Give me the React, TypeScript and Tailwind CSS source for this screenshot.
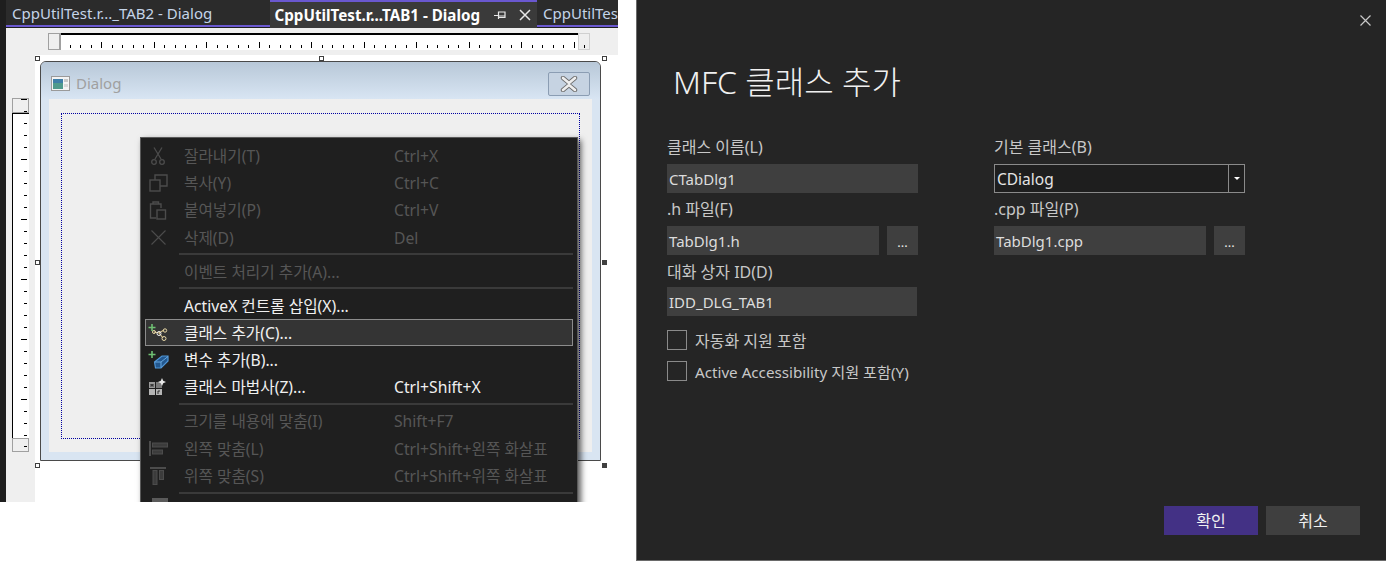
import type { ReactNode } from "react";

const FONT = "font-['Noto_Sans','Noto_Sans_CJK_KR',sans-serif]";

function HRuler() {
  const ticks = [];
  for (let i = 0; i < 49; i++) {
    const x = Math.floor(9 + i * 10.51) + 0.5;
    const major = i % 5 === 3;
    ticks.push(<line key={i} x1={x} x2={x} y1={major ? 7 : 10} y2={13} stroke="#000" strokeWidth="1" />);
  }
  return (
    <div className="flex h-[17px] w-[542px]">
      <div className="h-[17px] w-[13px] border border-[#a0a0a0] bg-[#efefef] border-r-2" />
      <svg width="517" height="17" className="block border-t-2 border-t-black bg-white">
        {ticks}
      </svg>
      <div className="flex h-[17px] w-[12px] items-end justify-center border border-[#d0d0d0] bg-[#efefef] pb-[1px]">
        <div className="h-[3px] w-px bg-black" />
      </div>
    </div>
  );
}

function VRuler() {
  const ticks = [];
  for (let i = 0; i < 27; i++) {
    const y = 9.5 + i * 12;
    const major = i % 5 === 3;
    ticks.push(<line key={i} x1={major ? 8 : 11} x2={14} y1={y} y2={y} stroke="#000" strokeWidth="1" />);
  }
  return (
    <div className="ml-[6px] mt-[70px] flex w-[17px] flex-col">
      <div className="relative h-[15px] w-[17px] border border-[#a0a0a0] bg-[#efefef]">
        <div className="absolute right-[1px] top-0 h-px w-[6px] bg-black" />
        <div className="absolute bottom-0 right-[1px] h-px w-[3px] bg-black" />
      </div>
      <svg width="17" height="325" className="block border-l border-t border-l-black border-t-black bg-white">
        {ticks}
      </svg>
      <div className="relative h-[14px] w-[17px] border border-[#a0a0a0] bg-[#efefef]">
        <div className="absolute right-[1px] top-[7px] h-px w-[3px] bg-black" />
      </div>
    </div>
  );
}

function Handle({ x, y, filled }: { x: number; y: number; filled?: boolean }) {
  return (
    <div
      className={`absolute h-[5px] w-[5px] border border-[#404040] ${filled ? "bg-[#404040]" : "bg-white"}`}
      style={{ left: x, top: y }}
    />
  );
}

function DialogIcon() {
  return (
    <svg width="19" height="15" viewBox="0 0 19 15">
      <rect x="0.5" y="0.5" width="18" height="14" fill="#f4f4f4" stroke="#9a9a9a" />
      <rect x="2" y="3" width="10" height="10" fill="#4f9a8c" />
      <rect x="2" y="3" width="10" height="4" fill="#3f7fa8" />
      <rect x="13" y="3" width="4" height="3" fill="#c8c8c8" />
      <rect x="13" y="8" width="4" height="3" fill="#d8d8d8" />
    </svg>
  );
}

function CloseGlyph() {
  return (
    <svg width="18" height="16" viewBox="0 0 18 16">
      <path d="M3 2 L9 7 L15 2 M15 14 L9 9 L3 14" fill="none" stroke="#6e6e6e" strokeWidth="4.4" strokeLinecap="round" />
      <path d="M3 2 L9 7 L15 2 M15 14 L9 9 L3 14" fill="none" stroke="#eeeeee" strokeWidth="2.6" strokeLinecap="round" />
    </svg>
  );
}

const DIM = "#4c4c4c";

function Scissors() {
  return (
    <svg width="14" height="18" viewBox="0 0 14 18" fill="none" stroke={DIM} strokeWidth="1.3">
      <path d="M3 0.5 L10 12 M11 0.5 L4 12" />
      <circle cx="3" cy="15" r="2.3" />
      <circle cx="11" cy="15" r="2.3" />
    </svg>
  );
}

function CopyIcon() {
  return (
    <svg width="19" height="18" viewBox="0 0 19 18" fill="none" stroke={DIM} strokeWidth="1.4">
      <rect x="1" y="6" width="10" height="11" />
      <path d="M6 6 V1 H18 V12 H11" />
    </svg>
  );
}

function PasteIcon() {
  return (
    <svg width="18" height="20" viewBox="0 0 18 20" fill="none" stroke={DIM} strokeWidth="1.4">
      <path d="M7 18 H1.5 V4 H12 V8" />
      <path d="M4 4 V2 H9.5 V4" />
      <rect x="8" y="10" width="8.5" height="9" />
    </svg>
  );
}

function DeleteIcon() {
  return (
    <svg width="15" height="15" viewBox="0 0 15 15" fill="none" stroke={DIM} strokeWidth="1.1">
      <path d="M0.5 0.5 L14.5 14.5 M14.5 0.5 L0.5 14.5" />
    </svg>
  );
}

function AddClassIcon() {
  return (
    <svg width="20" height="18" viewBox="0 0 20 18" fill="none">
      <path d="M4 0 V7 M0.5 3.5 H7.5" stroke="#6fbf73" strokeWidth="1.6" />
      <path d="M6 8 L11 9 L16 6 M11 9 L15 14" stroke="#d8c48e" strokeWidth="1.1" />
      <circle cx="6" cy="8" r="1.5" stroke="#e6d6a6" />
      <circle cx="11" cy="9.5" r="2" stroke="#f0f0f0" />
      <circle cx="17" cy="6.5" r="1.7" stroke="#e6d6a6" />
      <circle cx="16" cy="14.5" r="2" stroke="#e6d6a6" />
    </svg>
  );
}

function AddVarIcon() {
  return (
    <svg width="21" height="18" viewBox="0 0 21 18" fill="none">
      <path d="M4 0 V7 M0.5 3.5 H7.5" stroke="#6fbf73" strokeWidth="1.6" />
      <path d="M6.5 11 L14 5 H20 V10 L13 17 H7.5 Z" fill="#23588f" stroke="#4f95d6" strokeWidth="1.2" />
      <path d="M7 11 H13 L20 5.5 M13 11 V16.5" stroke="#6fb0e6" strokeWidth="0.9" />
    </svg>
  );
}

function WizardIcon() {
  return (
    <svg width="18" height="18" viewBox="0 0 18 18">
      <rect x="0" y="4" width="6" height="6" fill="#9a9a9a" />
      <rect x="7" y="4" width="6" height="6" fill="#9a9a9a" opacity="0.75" />
      <rect x="0" y="11" width="6" height="6" fill="#b5b5b5" />
      <rect x="7" y="11" width="6" height="6" fill="#b5b5b5" />
      <path d="M2 9 V6 L3 8 L4 6 V9" stroke="#222" strokeWidth="0.8" fill="none" />
      <path d="M9 16 V13 H11" stroke="#222" strokeWidth="0.9" fill="none" />
      <path d="M13 0 L14.2 2.8 L17 4 L14.2 5.2 L13 8 L11.8 5.2 L9 4 L11.8 2.8 Z" fill="#e8e8e8" />
    </svg>
  );
}

function AlignLeftIcon() {
  return (
    <svg width="19" height="15" viewBox="0 0 19 15" fill="none" stroke={DIM}>
      <path d="M1 0 V15" strokeWidth="2" />
      <rect x="3.5" y="2" width="15" height="4" fill="#3c3c3c" />
      <rect x="3.5" y="9" width="10" height="4" fill="#3c3c3c" />
    </svg>
  );
}

function AlignTopIcon() {
  return (
    <svg width="16" height="18" viewBox="0 0 16 18" fill="none" stroke={DIM}>
      <path d="M0 1 H16" strokeWidth="2" />
      <rect x="3" y="3.5" width="4" height="14" fill="#3c3c3c" />
      <rect x="9.5" y="3.5" width="4" height="9" fill="#3c3c3c" />
    </svg>
  );
}

function MenuItem({
  label,
  shortcut,
  icon,
  disabled,
  active,
}: {
  label: string;
  shortcut?: string;
  icon?: ReactNode;
  disabled?: boolean;
  active?: boolean;
}) {
  return (
    <div
      className={`mx-[4px] flex h-[27.3px] items-center whitespace-nowrap border text-[15.7px] ${
        active ? "border-[#8c8c8c] bg-[#343434]" : "border-transparent"
      } ${disabled ? "text-[#565656]" : "text-[#f0f0f0]"}`}
    >
      <div className="flex w-[24px] shrink-0 items-center justify-center">{icon}</div>
      <div className="ml-[14px] mt-[2px] w-[210px] shrink-0">{label}</div>
      <div className="mt-[2px]">{shortcut}</div>
    </div>
  );
}

function MenuSep() {
  return (
    <div className="flex h-[6.6px] items-center pl-[38px] pr-[4px]">
      <div className="h-[2px] w-full bg-[#3a3a3a]" />
    </div>
  );
}

function ContextMenu() {
  return (
    <div className="absolute left-[140px] top-[137px] h-[380px] w-[438px] border border-[#5a5a5a] bg-[#1f1f1f] pt-[4px] shadow-[3px_3px_6px_rgba(0,0,0,0.65)]">
      <MenuItem label="잘라내기(T)" shortcut="Ctrl+X" icon={<Scissors />} disabled />
      <MenuItem label="복사(Y)" shortcut="Ctrl+C" icon={<CopyIcon />} disabled />
      <MenuItem label="붙여넣기(P)" shortcut="Ctrl+V" icon={<PasteIcon />} disabled />
      <MenuItem label="삭제(D)" shortcut="Del" icon={<DeleteIcon />} disabled />
      <MenuSep />
      <MenuItem label="이벤트 처리기 추가(A)..." disabled />
      <MenuSep />
      <MenuItem label="ActiveX 컨트롤 삽입(X)..." />
      <MenuItem label="클래스 추가(C)..." icon={<AddClassIcon />} active />
      <MenuItem label="변수 추가(B)..." icon={<AddVarIcon />} />
      <MenuItem label="클래스 마법사(Z)..." shortcut="Ctrl+Shift+X" icon={<WizardIcon />} />
      <MenuSep />
      <MenuItem label="크기를 내용에 맞춤(I)" shortcut="Shift+F7" disabled />
      <MenuItem label="왼쪽 맞춤(L)" shortcut="Ctrl+Shift+왼쪽 화살표" icon={<AlignLeftIcon />} disabled />
      <MenuItem label="위쪽 맞춤(S)" shortcut="Ctrl+Shift+위쪽 화살표" icon={<AlignTopIcon />} disabled />
      <MenuSep />
      <div className="ml-[11px] mt-[2px] h-[10px] w-[16px] bg-[#5a5a5a]" />
    </div>
  );
}

function EditorPanel() {
  return (
    <div className={`relative flex h-[502px] w-[618px] shrink-0 flex-col overflow-hidden bg-white ${FONT}`}>
      {/* tabs */}
      <div className="flex h-[28px] shrink-0 bg-[#1e1e1e] pl-[6px] text-[15px] leading-[24px]">
        <div className="h-[27px] w-[264px] whitespace-nowrap border-b-[2px] border-b-[#6a58d0] bg-[#2b2b2b] pl-[6px] pt-px text-[#c4d4e8]">
          CppUtilTest.r..._TAB2 - Dialog
        </div>
        <div className="flex h-[28px] w-[268px] items-center whitespace-nowrap border-t-[2px] border-t-[#6a58d0] bg-[#3a3a3a] pl-[5px] text-[15.2px] font-bold text-white">
          <span>CppUtilTest.r...TAB1 - Dialog</span>
          <svg width="14" height="14" viewBox="0 0 14 14" className="ml-[13px]" fill="none" stroke="#e8e8e8">
            <path d="M1 7.5 H5 M5.5 3.5 V11 M5.5 4 H12 V9.5 H5.5 M5.5 8 H12" strokeWidth="1.2" />
          </svg>
          <svg width="14" height="14" viewBox="0 0 14 14" className="ml-[11px]" fill="none" stroke="#e8e8e8">
            <path d="M2 2 L12 12 M12 2 L2 12" strokeWidth="1.5" />
          </svg>
        </div>
        <div className="h-[27px] flex-1 whitespace-nowrap border-b-[2px] border-b-[#6a58d0] bg-[#2b2b2b] pl-[6px] pt-px text-[#c4d4e8]">
          CppUtilTes
        </div>
      </div>
      {/* designer */}
      <div className="flex flex-1">
        <div className="w-[6px] bg-[#1e1e1e]" />
        <div className="w-[29px] bg-[#efefef]">
          <VRuler />
        </div>
        <div className="flex flex-1 flex-col">
          <div className="h-[27px] shrink-0 bg-[#efefef] pl-[13px] pt-[5px]">
            <HRuler />
          </div>
          <div className="pl-[5px] pt-[6px]">
            <div className="flex h-[400px] w-[561px] flex-col overflow-hidden rounded-t-[6px] border border-[#4a4a4a] bg-[#d9e5f2]">
              <div className="flex h-[37px] shrink-0 items-center bg-gradient-to-b from-[#b8c8d8] to-[#d8e5f3] pl-[10px] pr-[10px] pt-[6px]">
                <DialogIcon />
                <span className="ml-[6px] text-[15px] text-[#a0a0a0]">Dialog</span>
                <div className="ml-auto flex h-[24px] w-[42px] items-center justify-center rounded-[2px] border border-[#8b9db3] bg-[#c6d3e2]">
                  <CloseGlyph />
                </div>
              </div>
              <div className="mx-[8px] mb-[8px] flex-1 bg-[#efefef] pl-[12px] pr-[12px] pt-[14px]">
                <div className="h-[326px] border border-dotted border-[#0000a0]" />
              </div>
            </div>
          </div>
        </div>
      </div>
      <Handle x={35} y={56} />
      <Handle x={319} y={56} />
      <Handle x={602} y={56} />
      <Handle x={35} y={260} />
      <Handle x={602} y={260} filled />
      <Handle x={35} y={463} />
      <Handle x={319} y={463} filled />
      <Handle x={602} y={463} filled />
      <ContextMenu />
    </div>
  );
}

function Field({ value, className }: { value: string; className: string }) {
  return (
    <div className={`flex h-[29px] items-center bg-[#3f3f3f] pl-[2px] pt-[2px] text-[15px] text-[#dcdcdc] ${className}`}>{value}</div>
  );
}

function Browse() {
  return (
    <div className="flex h-[29px] w-[31px] items-center justify-center bg-[#3f3f3f] pt-[5px] text-[13px] text-[#e8e8e8]">
      ...
    </div>
  );
}

function Label({ children, className = "" }: { children: ReactNode; className?: string }) {
  return <div className={`whitespace-nowrap text-[16px] leading-[20px] text-[#c8c8c8] ${className}`}>{children}</div>;
}

function Check({ label, className }: { label: string; className: string }) {
  return (
    <div className="flex h-[20px] items-center">
      <div className="h-[20px] w-[20px] border border-[#8a8a8a]" />
      <span className={`ml-[8px] mt-[2px] text-[#c8c8c8] ${className}`}>{label}</span>
    </div>
  );
}

function WizardDialog() {
  return (
    <div className={`flex h-[561px] w-[750px] shrink-0 flex-col border-b border-l border-[#6a6a6a] bg-[#252525] ${FONT}`}>
      <div className="flex h-[40px] shrink-0 justify-end pr-[15px] pt-[15px]">
        <svg width="11" height="11" viewBox="0 0 11 11" fill="none" stroke="#c8c8c8" strokeWidth="1.2">
          <path d="M0.5 0.5 L10.5 10.5 M10.5 0.5 L0.5 10.5" />
        </svg>
      </div>
      <div className="ml-[36px] mt-[20px] text-[32px] font-light leading-[44px] text-[#f0f0f0]">MFC 클래스 추가</div>
      <div className="ml-[30px] mt-[33px] flex">
        <div className="w-[327px]">
          <Label>클래스 이름(L)</Label>
          <Field value="CTabDlg1" className="mt-[7px] w-[251px]" />
          <Label className="mt-[6px]">.h 파일(F)</Label>
          <div className="mt-[7px] flex gap-[8px]">
            <Field value="TabDlg1.h" className="w-[212px]" />
            <Browse />
          </div>
          <Label className="mt-[7px]">대화 상자 ID(D)</Label>
          <Field value="IDD_DLG_TAB1" className="mt-[5px] w-[250px]" />
          <div className="mt-[14px] flex flex-col gap-[11px]">
            <Check label="자동화 지원 포함" className="text-[16px]" />
            <Check label="Active Accessibility 지원 포함(Y)" className="text-[15.2px]" />
          </div>
        </div>
        <div>
          <Label>기본 클래스(B)</Label>
          <div className="mt-[7px] flex h-[29px] w-[251px] items-center border border-[#8a8a8a] bg-[#1e1e1e] pt-[2px] text-[15.5px] text-[#e4e4e4]">
            <span className="flex-1 pl-[2px]">CDialog</span>
            <div className="-mt-[2px] flex h-[27px] w-[16px] items-center justify-center border-l border-[#8a8a8a]">
              <div className="h-0 w-0 border-x-[3px] border-t-[3px] border-x-transparent border-t-white" />
            </div>
          </div>
          <Label className="mt-[6px]">.cpp 파일(P)</Label>
          <div className="mt-[7px] flex gap-[8px]">
            <Field value="TabDlg1.cpp" className="w-[212px]" />
            <Browse />
          </div>
        </div>
      </div>
      <div className="mt-auto flex justify-end gap-[8px] pb-[25px] pr-[26px] text-[16px] text-[#f0f0f0]">
        <div className="flex h-[29px] w-[94px] items-center justify-center bg-[#433185]">확인</div>
        <div className="flex h-[29px] w-[94px] items-center justify-center bg-[#3f3f3f]">취소</div>
      </div>
    </div>
  );
}

export default function App() {
  return (
    <div className="flex h-[564px] w-[1386px] items-start justify-between overflow-hidden bg-white">
      <EditorPanel />
      <WizardDialog />
    </div>
  );
}
